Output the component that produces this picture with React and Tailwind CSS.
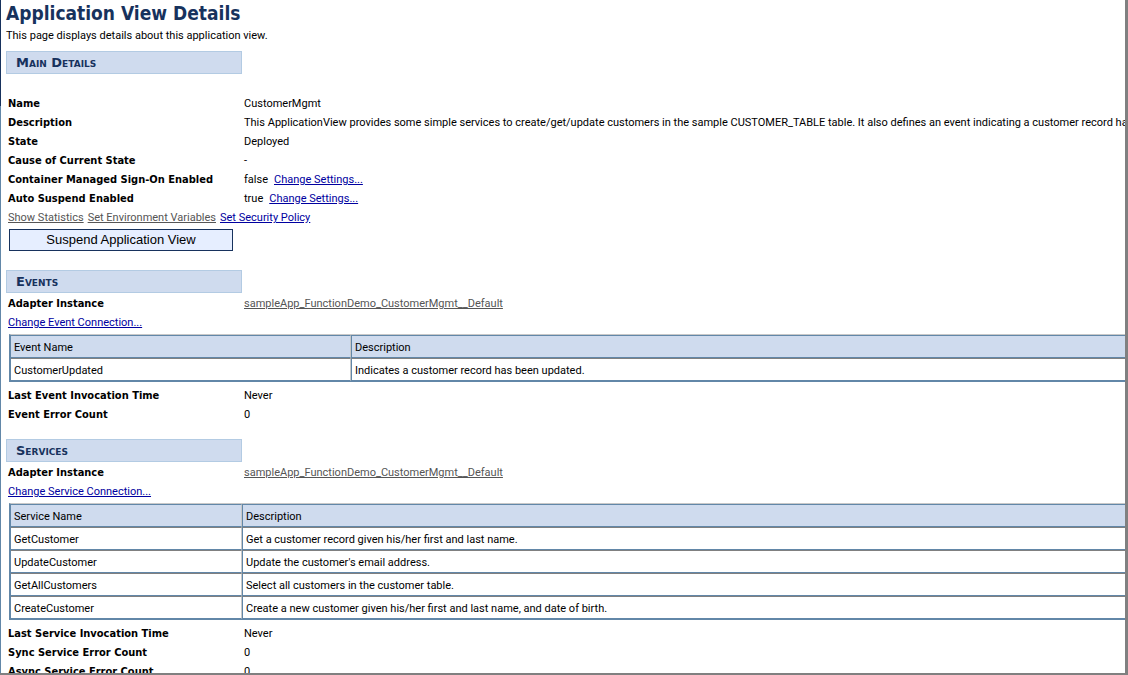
const events = [["CustomerUpdated", "Indicates a customer record has been updated."]];

const services = [
  ["GetCustomer", "Get a customer record given his/her first and last name."],
  ["UpdateCustomer", "Update the customer's email address."],
  ["GetAllCustomers", "Select all customers in the customer table."],
  ["CreateCustomer", "Create a new customer given his/her first and last name, and date of birth."],
];

function SectionTitle({ children }) {
  return (
    <h2 className="flex h-[23px] w-[236px] items-center border border-[#b3cbe3] bg-[#cfdbee] pl-[9px] font-['DejaVu_Sans',sans-serif] text-[13px] font-bold text-[#17325d] [font-variant:small-caps]">
      {children}
    </h2>
  );
}

function Row({ label, children }) {
  return (
    <div className="grid h-[19px] grid-cols-[236px_1fr] items-center pl-[7px] whitespace-nowrap">
      <dt className="font-['DejaVu_Sans_Condensed','DejaVu_Sans',sans-serif] font-bold">{label}</dt>
      <dd>{children}</dd>
    </div>
  );
}

function Link({ muted, children }) {
  return (
    <a href="#" className={muted ? "text-[#555555] underline" : "text-[#0000a0] underline"}>
      {children}
    </a>
  );
}

function DataTable({ nameLabel, rows, nameWidth }) {
  return (
    <div className="pt-0.5 pl-2">
      <table className="w-full border-separate border-spacing-0 border-t border-b border-l-2 border-t-[#c8c8c8] border-b-[#6287a8] border-l-[#6287a8] text-left">
        <thead>
          <tr className="h-[23px] bg-[#cfdbee]">
            <th className={`${nameWidth} border-y border-r border-y-[#6287a8] border-r-[#c8c8c8] px-[3px] pt-0.5 font-normal`}>
              {nameLabel}
            </th>
            <th className="border-y border-l border-[#6287a8] px-[3px] pt-0.5 font-normal">Description</th>
          </tr>
        </thead>
        <tbody>
          {rows.map(([name, description]) => (
            <tr key={name} className="h-[23px]">
              <td className="border-y border-r border-t-[#808080] border-r-[#c8c8c8] border-b-[#6287a8] px-[3px] pt-0.5">{name}</td>
              <td className="border-y border-l border-t-[#808080] border-b-[#6287a8] border-l-[#6287a8] px-[3px] pt-0.5">
                {description}
              </td>
            </tr>
          ))}
        </tbody>
      </table>
    </div>
  );
}

export default function App() {
  return (
    <div className="flex h-screen overflow-hidden border-r-[3px] border-b-2 border-[#808080] bg-white font-[Roboto,sans-serif] text-[11px] leading-[15px] text-black">
      <div className="flex w-px shrink-0 flex-col">
        <div className="h-[106px] bg-[#17325d]" />
        <div className="grow bg-[#6287a8]" />
      </div>
      <main className="min-w-0 grow overflow-hidden">
        <header className="pl-[5px]">
          <h1 className="pb-px font-['DejaVu_Sans_Condensed','DejaVu_Sans',sans-serif] text-[19px] leading-[27px] font-bold text-[#17325d]">
            Application View Details
          </h1>
          <p>This page displays details about this application view.</p>
        </header>

        <section className="pt-2">
          <div className="pb-5 pl-[5px]">
            <SectionTitle>Main Details</SectionTitle>
          </div>
          <dl>
            <Row label="Name">CustomerMgmt</Row>
            <Row label="Description">
              This ApplicationView provides some simple services to create/get/update customers in the sample
              CUSTOMER_TABLE table. It also defines an event indicating a customer record has been updated.
            </Row>
            <Row label="State">Deployed</Row>
            <Row label="Cause of Current State">-</Row>
            <Row label="Container Managed Sign-On Enabled">
              <span className="mr-1.5">false</span>
              <Link>Change Settings...</Link>
            </Row>
            <Row label="Auto Suspend Enabled">
              <span className="mr-1.5">true</span>
              <Link>Change Settings...</Link>
            </Row>
          </dl>
          <div className="flex h-[19px] items-center gap-1 pl-[7px]">
            <Link muted>Show Statistics</Link>
            <Link muted>Set Environment Variables</Link>
            <Link>Set Security Policy</Link>
          </div>
          <div className="pt-0.5 pl-2">
            <button
              type="button"
              className="block h-[22px] w-56 border border-[#17325d] bg-[#e6eeff] font-['Liberation_Sans',sans-serif] text-[13px] leading-4"
            >
              Suspend Application View
            </button>
          </div>
        </section>

        <section className="pt-[19px]">
          <div className="pb-px pl-[5px]">
            <SectionTitle>Events</SectionTitle>
          </div>
          <dl>
            <Row label="Adapter Instance">
              <Link muted>sampleApp_FunctionDemo_CustomerMgmt__Default</Link>
            </Row>
          </dl>
          <div className="flex h-[19px] items-center pl-[7px]">
            <Link>Change Event Connection...</Link>
          </div>
          <DataTable nameLabel="Event Name" rows={events} nameWidth="w-[340px]" />
          <dl className="pt-1">
            <Row label="Last Event Invocation Time">Never</Row>
            <Row label="Event Error Count">0</Row>
          </dl>
        </section>

        <section className="pt-[15px]">
          <div className="pb-px pl-[5px]">
            <SectionTitle>Services</SectionTitle>
          </div>
          <dl>
            <Row label="Adapter Instance">
              <Link muted>sampleApp_FunctionDemo_CustomerMgmt__Default</Link>
            </Row>
          </dl>
          <div className="flex h-[19px] items-center pl-[7px]">
            <Link>Change Service Connection...</Link>
          </div>
          <DataTable nameLabel="Service Name" rows={services} nameWidth="w-[231px]" />
          <dl className="pt-1">
            <Row label="Last Service Invocation Time">Never</Row>
            <Row label="Sync Service Error Count">0</Row>
            <Row label="Async Service Error Count">0</Row>
          </dl>
        </section>
      </main>
    </div>
  );
}
